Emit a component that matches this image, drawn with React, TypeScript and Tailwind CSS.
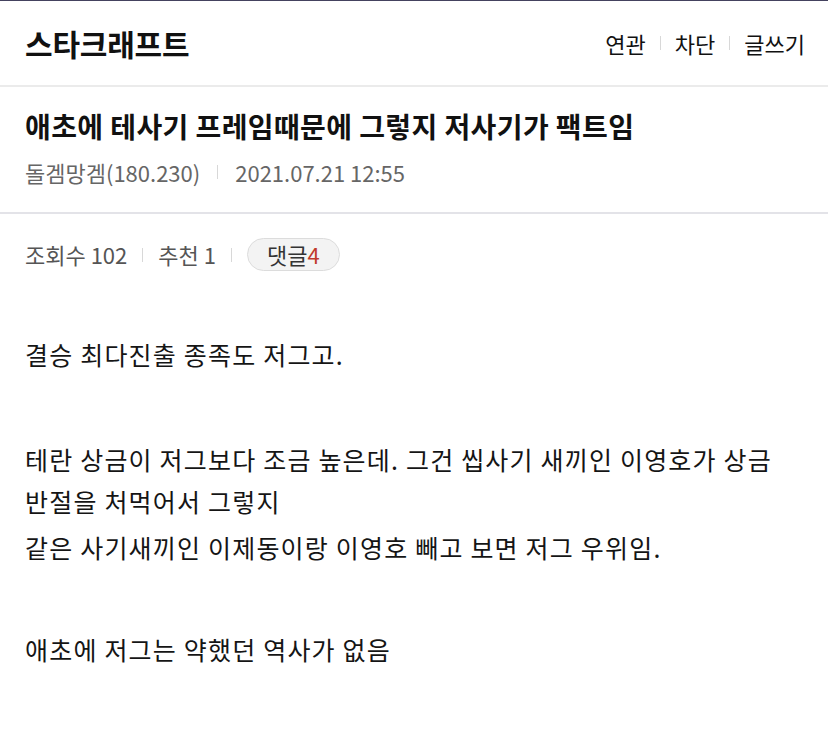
export default function App() {
  const font = { fontFamily: '"Noto Sans CJK KR", "Noto Sans", sans-serif' };
  return (
    <div className="min-h-screen bg-white border-t border-[#44425f]" style={font}>
      {/* top bar */}
      <header className="h-[86px] flex items-center justify-between pl-[25px] pr-[23px] border-b-2 border-[#ebebeb]">
        <h1 className="text-[30px] font-bold text-[#111] tracking-[-0.2px]">스타크래프트</h1>
        <nav className="flex items-center text-[22px] text-[#111]">
          <a>연관</a>
          <span className="mx-[14px] w-px h-[14px] bg-[#d8d8d8]" />
          <a>차단</a>
          <span className="mx-[14px] w-px h-[14px] bg-[#d8d8d8]" />
          <a>글쓰기</a>
        </nav>
      </header>

      {/* post head */}
      <section className="px-[25px] pt-[21px] pb-[26px] border-b-2 border-[#e3e3e8]">
        <h2 className="text-[28px] leading-[36px] font-bold text-[#111] tracking-[0.4px] break-keep">
          애초에 테사기 프레임때문에 그렇지 저사기가 팩트임
        </h2>
        <div className="mt-[14px] flex items-center text-[22px] leading-[28px] text-[#666]">
          <span>돌겜망겜(180.230)</span>
          <span className="mx-[17px] w-px h-[14px] bg-[#d8d8d8]" />
          <span>2021.07.21 12:55</span>
        </div>
      </section>

      {/* stats */}
      <div className="px-[25px] pt-[24px] flex items-center text-[22px] text-[#555]">
        <span>조회수 102</span>
        <span className="mx-[15px] w-px h-[14px] bg-[#d8d8d8]" />
        <span>추천 1</span>
        <span className="mx-[15px] w-px h-[14px] bg-[#d8d8d8]" />
        <span className="h-[33px] px-[19px] flex items-center rounded-full border border-[#dcdcdc] bg-[#f3f3f3] text-[#333]">
          댓글<span className="text-[#c0392b]">4</span>
        </span>
      </div>

      {/* body */}
      <article className="px-[25px] pt-[62px] text-[25px] leading-[42px] tracking-[1.2px] text-[#151515] break-keep flex flex-col gap-[4px]">
        <p>결승 최다진출 종족도 저그고.</p>
        <p className="h-[55px]" />
        <p>테란 상금이 저그보다 조금 높은데. 그건 씹사기 새끼인 이영호가 상금 반절을 처먹어서 그렇지</p>
        <p>같은 사기새끼인 이제동이랑 이영호 빼고 보면 저그 우위임.</p>
        <p className="h-[52px]" />
        <p>애초에 저그는 약했던 역사가 없음</p>
      </article>
    </div>
  );
}
